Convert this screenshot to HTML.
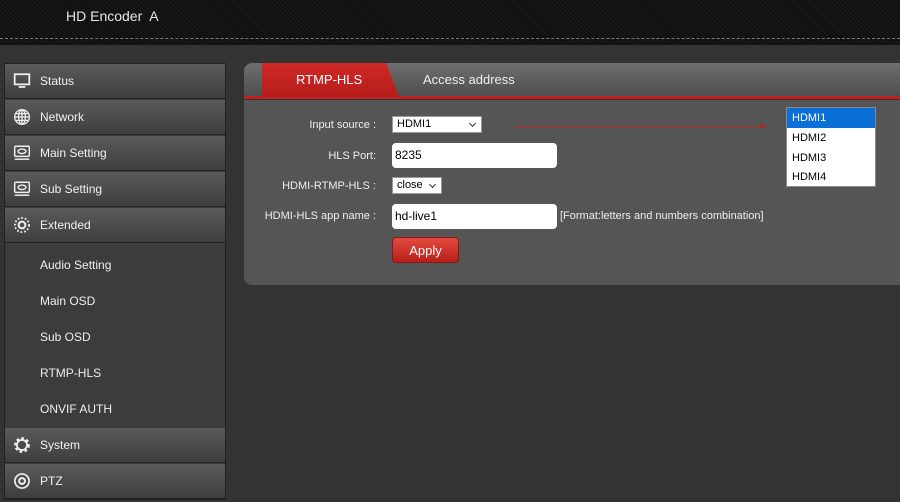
<!DOCTYPE html>
<html><head><style>
*{margin:0;padding:0;box-sizing:border-box}
body{width:900px;height:502px;background:#333;font-family:"Liberation Sans",Arial,sans-serif;position:relative;overflow:hidden;color:#fff}
.hdr{position:absolute;left:0;top:0;width:900px;height:45px;background:repeating-linear-gradient(45deg,#1a1a1a 0 1px,#101010 1px 3px),#141414;}
.hdr .t{position:absolute;left:66px;top:8px;font-size:14px;color:#e8e8e8}
.hdr .d{position:absolute;left:0;top:38px;width:900px;border-top:1px dashed #777}
.side{position:absolute;left:4px;top:63px;width:222px;height:437px;background:#3c3c3c;border:1px solid #222}
.it{position:absolute;left:0;width:220px;height:35px;background:linear-gradient(#5a5a5a,#3e3e3e);border-bottom:1px solid #222;font-size:12px;line-height:35px;padding-left:35px;color:#f0f0f0}
.it svg{position:absolute;left:8px;top:8px}
.sub{position:absolute;left:35px;font-size:12px;color:#eee}
.panel{position:absolute;left:244px;top:63px;width:660px;height:222px;background:#555;border-radius:8px 0 0 8px;overflow:hidden}
.tabbar{position:absolute;left:0;top:0;width:660px;height:34px;background:linear-gradient(#6e6e6e,#4e4e4e)}
.redl{position:absolute;left:0;top:33px;width:660px;height:4px;background:#c4201e;border-bottom:1px solid #333}
.tab{position:absolute;left:18px;top:0;width:137px;height:34px;background:linear-gradient(#d02a26,#b41c1a);clip-path:polygon(0 0,124px 0,137px 34px,0 34px);font-size:13px;line-height:34px;padding-left:34px}
.tab2{position:absolute;left:179px;top:0;font-size:13px;line-height:34px;color:#eee}
.lbl{position:absolute;font-size:11px;color:#eee;text-align:right;width:140px;left:0}
.sel{position:absolute;background:#fff;border:1px solid #999;color:#000;font-size:11px;padding-left:4px;line-height:15px;height:17px}
.sel:after{content:"";position:absolute;right:6px;top:4px;width:4px;height:4px;border-right:1px solid #333;border-bottom:1px solid #333;transform:rotate(45deg)}
.inp{position:absolute;background:#fff;border-radius:4px;color:#000;font-size:12px;padding-left:3px;height:25px;line-height:25px;width:165px}
</style></head><body>
<div class="hdr"><div class="t">HD Encoder&nbsp; A</div><div class="d"></div></div>
<div class="side">
<div class="it" style="top:0"><svg width="18" height="18" viewBox="0 0 16 16"><rect x="1.5" y="2" width="13" height="9" fill="none" stroke="#eee" stroke-width="1.6"/><rect x="5" y="12.5" width="6" height="1.6" fill="#eee"/></svg>Status</div>
<div class="it" style="top:36px"><svg width="18" height="18" viewBox="0 0 16 16" fill="none" stroke="#eee" stroke-width="1.2"><circle cx="8" cy="8" r="6.5"/><ellipse cx="8" cy="8" rx="3" ry="6.5"/><path d="M1.5 8h13M2.5 5h11M2.5 11h11M8 1.5v13"/></svg>Network</div>
<div class="it" style="top:72px"><svg width="18" height="18" viewBox="0 0 16 16" fill="none" stroke="#eee" stroke-width="1.3"><rect x="1.5" y="2" width="13" height="9" rx="1"/><ellipse cx="8" cy="6.5" rx="3.5" ry="2"/><path d="M1.5 13.5h13"/></svg>Main Setting</div>
<div class="it" style="top:108px"><svg width="18" height="18" viewBox="0 0 16 16" fill="none" stroke="#eee" stroke-width="1.3"><rect x="1.5" y="2" width="13" height="9" rx="1"/><ellipse cx="8" cy="6.5" rx="3.5" ry="2"/><path d="M1.5 13.5h13"/></svg>Sub Setting</div>
<div class="it" style="top:144px"><svg width="18" height="18" viewBox="0 0 16 16" fill="none" stroke="#eee"><circle cx="8" cy="8" r="3" stroke-width="1.8"/><circle cx="8" cy="8" r="6.3" stroke-width="1.6" stroke-dasharray="1.6 1.6"/></svg>Extended</div>
<div class="sub" style="top:194px">Audio Setting</div>
<div class="sub" style="top:230px">Main OSD</div>
<div class="sub" style="top:266px">Sub OSD</div>
<div class="sub" style="top:302px">RTMP-HLS</div>
<div class="sub" style="top:338px">ONVIF AUTH</div>
<div class="it" style="top:364px"><svg width="18" height="18" viewBox="0 0 16 16"><circle cx="8" cy="8" r="5.5" fill="none" stroke="#eee" stroke-width="3" stroke-dasharray="2.2 2"/><circle cx="8" cy="8" r="4.5" fill="none" stroke="#eee" stroke-width="1.6"/></svg>System</div>
<div class="it" style="top:400px"><svg width="18" height="18" viewBox="0 0 16 16" fill="none" stroke="#eee"><circle cx="8" cy="8" r="6.3" stroke-width="1.5"/><circle cx="8" cy="8" r="2.6" stroke-width="1.8"/></svg>PTZ</div>
</div>
<div class="panel">
<div class="tabbar"></div><div class="redl"></div>
<div class="tab">RTMP-HLS</div><div class="tab2">Access address</div>
<div class="lbl" style="top:56px;left:-8px">Input source :</div>
<div class="sel" style="left:148px;top:53px;width:90px">HDMI1</div>
<div style="position:absolute;left:270px;top:63px;width:248px;height:1px;background:#b02a2a"></div>
<div style="position:absolute;left:516px;top:61px;border-left:7px solid #c02020;border-top:2.5px solid transparent;border-bottom:2.5px solid transparent"></div>
<div class="lbl" style="top:87px;left:-8px">HLS Port:</div>
<div class="inp" style="left:148px;top:80px">8235</div>
<div class="lbl" style="top:117px;left:-8px">HDMI-RTMP-HLS :</div>
<div class="sel" style="left:148px;top:114px;width:50px">close</div>
<div class="lbl" style="top:147px;left:-8px">HDMI-HLS app name :</div>
<div class="inp" style="left:148px;top:141px">hd-live1</div>
<div style="position:absolute;left:316px;top:147px;font-size:11px;color:#eee">[Format:letters and numbers combination]</div>
<div style="position:absolute;left:148px;top:174px;width:67px;height:26px;border-radius:4px;background:linear-gradient(#e24a3e,#b81e1a);border:1px solid #8a1512;font-size:13px;text-align:center;line-height:26px">Apply</div>
</div>
<div style="position:absolute;left:786px;top:107px;width:90px;height:80px;background:#fff;border:1px solid #888;font-size:11px;color:#000">
<div style="background:#0a6fd6;color:#fff;height:20px;line-height:20px;padding-left:5px">HDMI1</div>
<div style="height:20px;line-height:20px;padding-left:5px">HDMI2</div>
<div style="height:20px;line-height:20px;padding-left:5px">HDMI3</div>
<div style="height:19px;line-height:19px;padding-left:5px">HDMI4</div>
</div>
</body></html>
